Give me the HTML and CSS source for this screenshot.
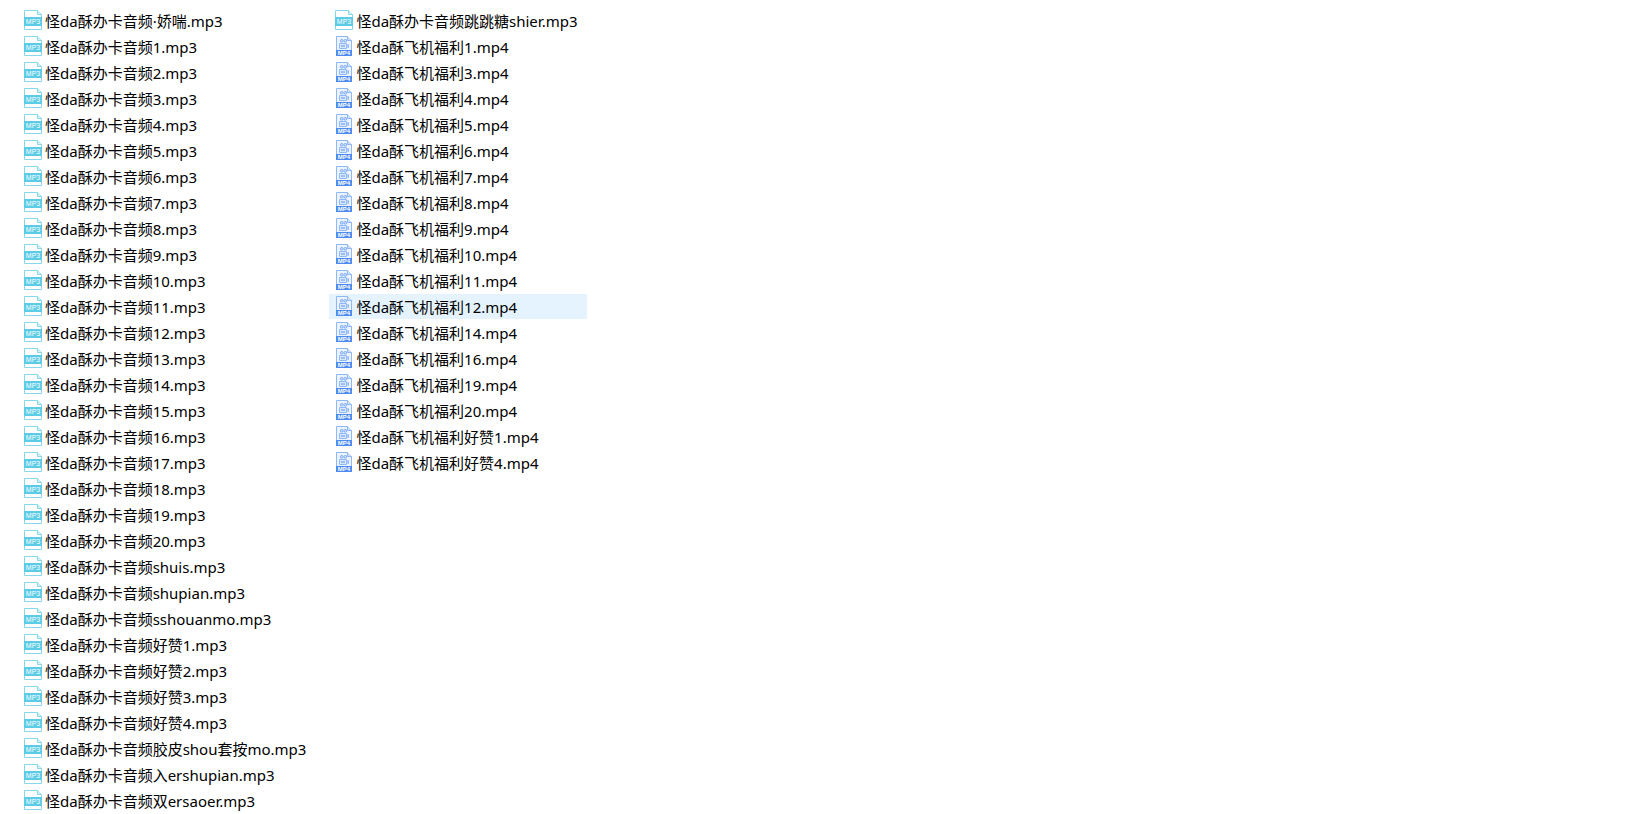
FILE: index.html
```
<!DOCTYPE html>
<html lang="zh-CN">
<head>
    <meta charset="UTF-8">
    <meta name="viewport" content="width=device-width, initial-scale=1.0">
    <title>文件列表</title>
    <link rel="stylesheet" href="styles.css">
</head>
<body>
    <svg class="sprite" aria-hidden="true">
        <symbol id="mp3" viewBox="0 0 18 20">
            <path d="M.5.5h13l4 4v15H.5z" fill="#fff" stroke="#84d8ea"/>
            <path d="M13.5.5v4h4" fill="#d8f3f9" stroke="#84d8ea"/>
            <path d="M0 7h18v9H0z" fill="#5bcbe6"/>
            <text x="9" y="14" class="tag tag-mp3">MP3</text>
        </symbol>
        <symbol id="mp4" viewBox="0 0 18 20">
            <path d="M1.5.5h11l4 4v15h-15z" fill="#edf4ff" stroke="#8fb8f7"/>
            <path d="M12.5.5v4h4" fill="#d3e4ff" stroke="#8fb8f7"/>
            <circle cx="6.7" cy="4.8" r="1.4" fill="#cfe1ff" stroke="#7dacf6"/>
            <circle cx="10.3" cy="4.8" r="1.4" fill="#cfe1ff" stroke="#7dacf6"/>
            <path d="M4.5 7.5h7v5h-7zM11.5 9.5l2-1v3l-2-1" fill="#dbe8ff" stroke="#8fb8f7"/>
            <path d="M6 10h4" stroke="#5c94f2"/>
            <path d="M1 14h16v6H1z" fill="#4c8bef"/>
            <text x="9" y="19" class="tag tag-mp4">MP4</text>
        </symbol>
    </svg>

    <ul class="files">
        <li class="file"><svg class="icon"><use href="#mp3"/></svg>怪da酥办卡音频·娇喘.mp3</li>
        <li class="file"><svg class="icon"><use href="#mp3"/></svg>怪da酥办卡音频1.mp3</li>
        <li class="file"><svg class="icon"><use href="#mp3"/></svg>怪da酥办卡音频2.mp3</li>
        <li class="file"><svg class="icon"><use href="#mp3"/></svg>怪da酥办卡音频3.mp3</li>
        <li class="file"><svg class="icon"><use href="#mp3"/></svg>怪da酥办卡音频4.mp3</li>
        <li class="file"><svg class="icon"><use href="#mp3"/></svg>怪da酥办卡音频5.mp3</li>
        <li class="file"><svg class="icon"><use href="#mp3"/></svg>怪da酥办卡音频6.mp3</li>
        <li class="file"><svg class="icon"><use href="#mp3"/></svg>怪da酥办卡音频7.mp3</li>
        <li class="file"><svg class="icon"><use href="#mp3"/></svg>怪da酥办卡音频8.mp3</li>
        <li class="file"><svg class="icon"><use href="#mp3"/></svg>怪da酥办卡音频9.mp3</li>
        <li class="file"><svg class="icon"><use href="#mp3"/></svg>怪da酥办卡音频10.mp3</li>
        <li class="file"><svg class="icon"><use href="#mp3"/></svg>怪da酥办卡音频11.mp3</li>
        <li class="file"><svg class="icon"><use href="#mp3"/></svg>怪da酥办卡音频12.mp3</li>
        <li class="file"><svg class="icon"><use href="#mp3"/></svg>怪da酥办卡音频13.mp3</li>
        <li class="file"><svg class="icon"><use href="#mp3"/></svg>怪da酥办卡音频14.mp3</li>
        <li class="file"><svg class="icon"><use href="#mp3"/></svg>怪da酥办卡音频15.mp3</li>
        <li class="file"><svg class="icon"><use href="#mp3"/></svg>怪da酥办卡音频16.mp3</li>
        <li class="file"><svg class="icon"><use href="#mp3"/></svg>怪da酥办卡音频17.mp3</li>
        <li class="file"><svg class="icon"><use href="#mp3"/></svg>怪da酥办卡音频18.mp3</li>
        <li class="file"><svg class="icon"><use href="#mp3"/></svg>怪da酥办卡音频19.mp3</li>
        <li class="file"><svg class="icon"><use href="#mp3"/></svg>怪da酥办卡音频20.mp3</li>
        <li class="file"><svg class="icon"><use href="#mp3"/></svg>怪da酥办卡音频shuis.mp3</li>
        <li class="file"><svg class="icon"><use href="#mp3"/></svg>怪da酥办卡音频shupian.mp3</li>
        <li class="file"><svg class="icon"><use href="#mp3"/></svg>怪da酥办卡音频sshouanmo.mp3</li>
        <li class="file"><svg class="icon"><use href="#mp3"/></svg>怪da酥办卡音频好赞1.mp3</li>
        <li class="file"><svg class="icon"><use href="#mp3"/></svg>怪da酥办卡音频好赞2.mp3</li>
        <li class="file"><svg class="icon"><use href="#mp3"/></svg>怪da酥办卡音频好赞3.mp3</li>
        <li class="file"><svg class="icon"><use href="#mp3"/></svg>怪da酥办卡音频好赞4.mp3</li>
        <li class="file"><svg class="icon"><use href="#mp3"/></svg>怪da酥办卡音频胶皮shou套按mo.mp3</li>
        <li class="file"><svg class="icon"><use href="#mp3"/></svg>怪da酥办卡音频入ershupian.mp3</li>
        <li class="file"><svg class="icon"><use href="#mp3"/></svg>怪da酥办卡音频双ersaoer.mp3</li>
        <li class="file"><svg class="icon"><use href="#mp3"/></svg>怪da酥办卡音频跳跳糖shier.mp3</li>
        <li class="file"><svg class="icon"><use href="#mp4"/></svg>怪da酥飞机福利1.mp4</li>
        <li class="file"><svg class="icon"><use href="#mp4"/></svg>怪da酥飞机福利3.mp4</li>
        <li class="file"><svg class="icon"><use href="#mp4"/></svg>怪da酥飞机福利4.mp4</li>
        <li class="file"><svg class="icon"><use href="#mp4"/></svg>怪da酥飞机福利5.mp4</li>
        <li class="file"><svg class="icon"><use href="#mp4"/></svg>怪da酥飞机福利6.mp4</li>
        <li class="file"><svg class="icon"><use href="#mp4"/></svg>怪da酥飞机福利7.mp4</li>
        <li class="file"><svg class="icon"><use href="#mp4"/></svg>怪da酥飞机福利8.mp4</li>
        <li class="file"><svg class="icon"><use href="#mp4"/></svg>怪da酥飞机福利9.mp4</li>
        <li class="file"><svg class="icon"><use href="#mp4"/></svg>怪da酥飞机福利10.mp4</li>
        <li class="file"><svg class="icon"><use href="#mp4"/></svg>怪da酥飞机福利11.mp4</li>
        <li class="file active"><svg class="icon"><use href="#mp4"/></svg>怪da酥飞机福利12.mp4</li>
        <li class="file"><svg class="icon"><use href="#mp4"/></svg>怪da酥飞机福利14.mp4</li>
        <li class="file"><svg class="icon"><use href="#mp4"/></svg>怪da酥飞机福利16.mp4</li>
        <li class="file"><svg class="icon"><use href="#mp4"/></svg>怪da酥飞机福利19.mp4</li>
        <li class="file"><svg class="icon"><use href="#mp4"/></svg>怪da酥飞机福利20.mp4</li>
        <li class="file"><svg class="icon"><use href="#mp4"/></svg>怪da酥飞机福利好赞1.mp4</li>
        <li class="file"><svg class="icon"><use href="#mp4"/></svg>怪da酥飞机福利好赞4.mp4</li>
    </ul>
</body>
</html>
```
FILE: styles.css
```
* {
    box-sizing: border-box;
}
body {
    margin: 0;
    background-color: #fff;
    color: #000;
    font-family: 'Noto Sans', 'Noto Sans CJK SC', sans-serif;
    font-size: 15px;
    line-height: 23px;
}
.sprite {
    display: none;
}
/* fills a column top to bottom, then wraps to the next one */
.files {
    display: flex;
    flex-flow: column wrap;
    align-content: flex-start;
    gap: 1px 13px;
    height: 100vh;
    margin: 0;
    padding: 8px 18px 0;
    list-style: none;
}
.file {
    display: flex;
    align-items: flex-start;
    gap: 3px;
    height: 25px;
    padding: 2px 10px 0 6px;
    white-space: nowrap;
}
.file:hover,
.file.active {
    background-color: #e5f3ff;
}
.icon {
    flex: none;
    width: 18px;
    height: 20px;
}
.tag {
    font-family: 'Liberation Sans', sans-serif;
    fill: #fff;
    text-anchor: middle;
}
.tag-mp3 {
    font-size: 7px;
}
.tag-mp4 {
    font-size: 6px;
    font-weight: bold;
}
```
